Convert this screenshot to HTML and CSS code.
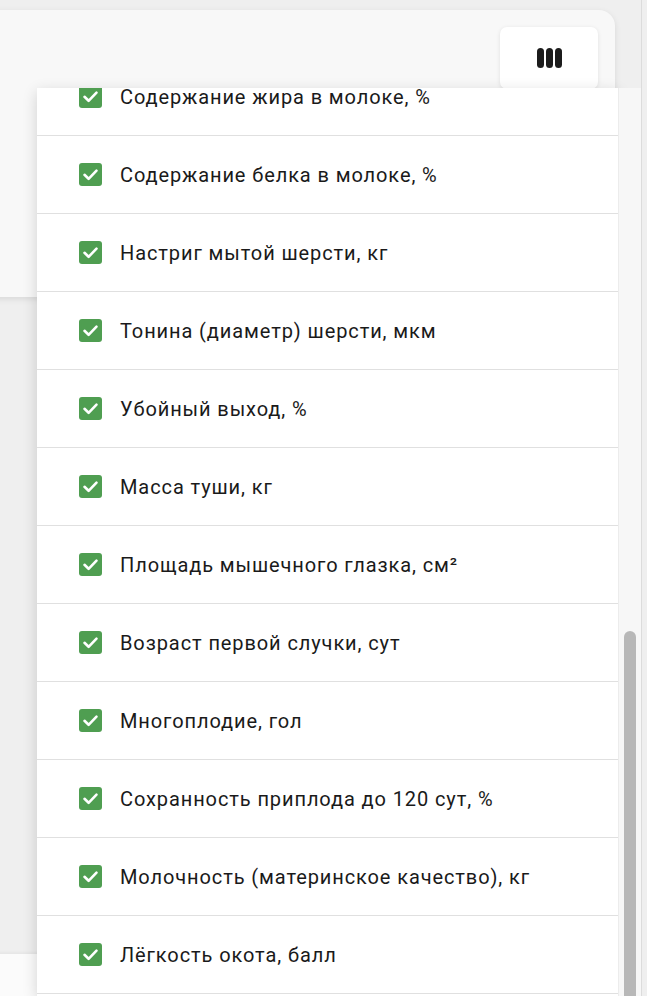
FILE: index.html
```html
<!DOCTYPE html>
<html lang="ru">
<head>
<meta charset="utf-8">
<link rel="stylesheet" href="styles.css">
</head>
<body>
<div class="page">
  <div class="card">
    <button class="col-btn" type="button" aria-label="Колонки">
      <svg width="25" height="20" viewBox="0 0 25 20">
        <rect x="0" y="0" width="7" height="20" rx="3.5" fill="#1c1c1c"/>
        <rect x="9" y="0" width="7" height="20" rx="3.5" fill="#1c1c1c"/>
        <rect x="18" y="0" width="7" height="20" rx="3.5" fill="#1c1c1c"/>
      </svg>
    </button>
  </div>
  <div class="gap-area"></div>
  <div class="card2"></div>

  <div class="menu">
    <ul class="list">
      <li class="row"><span class="cb"><svg viewBox="0 0 23 23"><path d="M5.5 11.8 L9.6 15.8 L17.5 7.6" /></svg></span><span class="label">Содержание жира в молоке, %</span></li>
      <li class="row"><span class="cb"><svg viewBox="0 0 23 23"><path d="M5.5 11.8 L9.6 15.8 L17.5 7.6" /></svg></span><span class="label">Содержание белка в молоке, %</span></li>
      <li class="row"><span class="cb"><svg viewBox="0 0 23 23"><path d="M5.5 11.8 L9.6 15.8 L17.5 7.6" /></svg></span><span class="label">Настриг мытой шерсти, кг</span></li>
      <li class="row"><span class="cb"><svg viewBox="0 0 23 23"><path d="M5.5 11.8 L9.6 15.8 L17.5 7.6" /></svg></span><span class="label">Тонина (диаметр) шерсти, мкм</span></li>
      <li class="row"><span class="cb"><svg viewBox="0 0 23 23"><path d="M5.5 11.8 L9.6 15.8 L17.5 7.6" /></svg></span><span class="label">Убойный выход, %</span></li>
      <li class="row"><span class="cb"><svg viewBox="0 0 23 23"><path d="M5.5 11.8 L9.6 15.8 L17.5 7.6" /></svg></span><span class="label">Масса туши, кг</span></li>
      <li class="row"><span class="cb"><svg viewBox="0 0 23 23"><path d="M5.5 11.8 L9.6 15.8 L17.5 7.6" /></svg></span><span class="label">Площадь мышечного глазка, см²</span></li>
      <li class="row"><span class="cb"><svg viewBox="0 0 23 23"><path d="M5.5 11.8 L9.6 15.8 L17.5 7.6" /></svg></span><span class="label">Возраст первой случки, сут</span></li>
      <li class="row"><span class="cb"><svg viewBox="0 0 23 23"><path d="M5.5 11.8 L9.6 15.8 L17.5 7.6" /></svg></span><span class="label">Многоплодие, гол</span></li>
      <li class="row"><span class="cb"><svg viewBox="0 0 23 23"><path d="M5.5 11.8 L9.6 15.8 L17.5 7.6" /></svg></span><span class="label">Сохранность приплода до 120 сут, %</span></li>
      <li class="row"><span class="cb"><svg viewBox="0 0 23 23"><path d="M5.5 11.8 L9.6 15.8 L17.5 7.6" /></svg></span><span class="label">Молочность (материнское качество), кг</span></li>
      <li class="row"><span class="cb"><svg viewBox="0 0 23 23"><path d="M5.5 11.8 L9.6 15.8 L17.5 7.6" /></svg></span><span class="label">Лёгкость окота, балл</span></li>
    </ul>
  </div>
  <div class="scrollbar"><div class="thumb"></div></div>
  <div class="edge-line"></div>
</div>
</body>
</html>
```
FILE: styles.css
```css
* { box-sizing: border-box; }
html, body {
  margin: 0;
  padding: 0;
  height: 996px;
  overflow: hidden;
  background: #efefef;
  font-family: Roboto, "Liberation Sans", Arial, sans-serif;
}
.page {
  position: relative;
  width: 647px;
  height: 996px;
  overflow: hidden;
  padding-top: 10px;
}
.card {
  margin-left: -20px;
  width: 635px;
  height: 287px;
  background: #f8f8f8;
  border-radius: 16px;
  box-shadow: 0 2px 6px rgba(0,0,0,0.10);
  display: flex;
  justify-content: flex-end;
  align-items: flex-start;
  padding: 17px 17px 0 0;
}
.col-btn {
  width: 98px;
  height: 62px;
  border: none;
  border-radius: 7px;
  background: #ffffff;
  box-shadow: 0 1px 4px rgba(0,0,0,0.10);
  display: flex;
  align-items: center;
  justify-content: center;
  padding: 0;
}
.col-btn svg { display: block; }
.gap-area {
  height: 657px;
}
.card2 {
  margin-left: -20px;
  width: 635px;
  height: 200px;
  background: #fbfbfb;
  border-radius: 16px;
  box-shadow: 0 -1px 4px rgba(0,0,0,0.06);
}
.menu {
  position: absolute;
  left: 37px;
  top: 88px;
  width: 581px;
  bottom: 0;
  background: #ffffff;
  box-shadow: 0 4px 14px rgba(0,0,0,0.16);
  overflow: hidden;
}
.list {
  list-style: none;
  margin: -30px 0 0 0;
  padding: 0;
}
.row {
  height: 78px;
  border-bottom: 1px solid #e0e0e0;
  display: flex;
  align-items: center;
  padding-left: 42px;
}
.cb {
  width: 23px;
  height: 23px;
  border-radius: 3px;
  background: #4f9e51;
  flex: none;
  display: flex;
}
.cb svg {
  width: 23px;
  height: 23px;
  fill: none;
  stroke: #ffffff;
  stroke-width: 2.6;
  stroke-linecap: round;
  stroke-linejoin: round;
}
.label {
  margin-left: 18px;
  font-size: 20px;
  color: #1a1a1a;
  letter-spacing: 0.9px;
  white-space: nowrap;
}
.scrollbar {
  position: absolute;
  left: 618px;
  top: 88px;
  width: 23px;
  bottom: 0;
  background: #f7f7f7;
  border-left: 1px solid #ececec;
}
.thumb {
  position: absolute;
  left: 5px;
  top: 543px;
  width: 12px;
  bottom: 0;
  border-radius: 6px 6px 0 0;
  background: #b8b8b8;
}
.edge-line {
  position: absolute;
  left: 641px;
  top: 0;
  bottom: 0;
  width: 1px;
  background: #dcdcdc;
}
```
